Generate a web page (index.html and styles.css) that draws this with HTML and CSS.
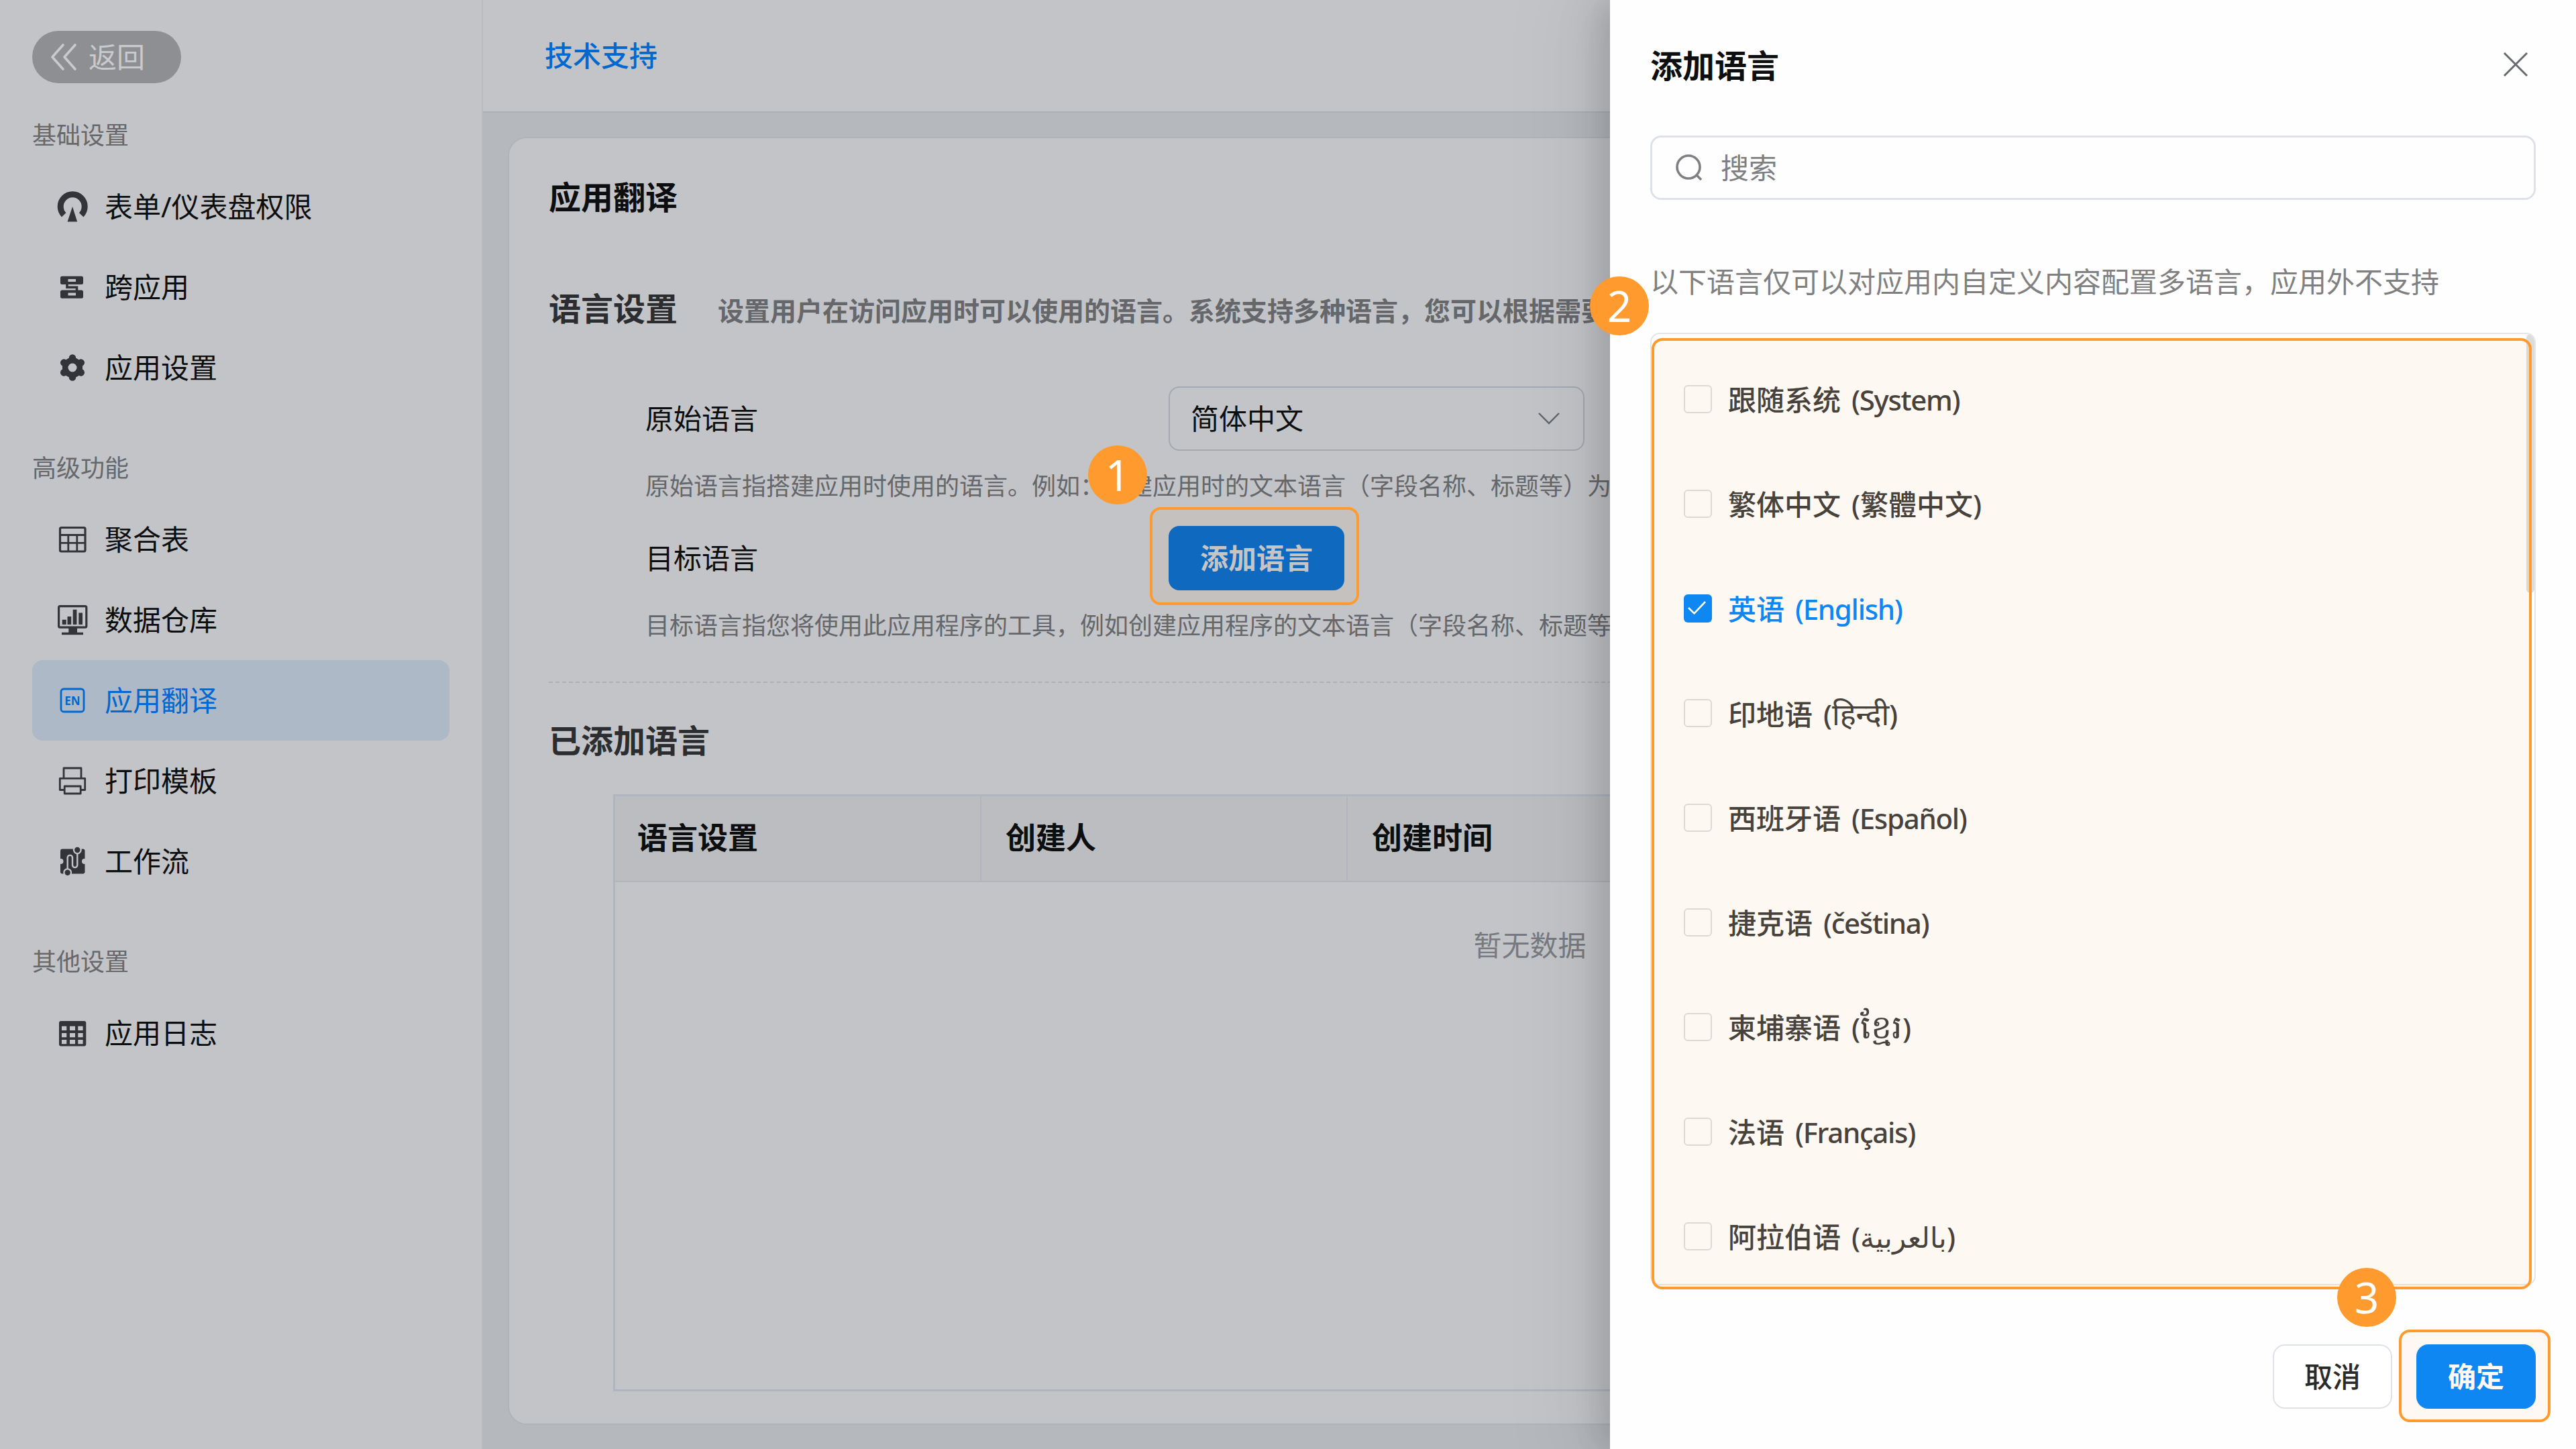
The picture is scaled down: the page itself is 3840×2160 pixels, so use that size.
FILE: index.html
```html
<!DOCTYPE html>
<html lang="zh-CN">
<head>
    <meta charset="UTF-8">
    <meta name="viewport" content="width=device-width, initial-scale=1.0">
    <title>应用翻译</title>
    <link rel="stylesheet" href="styles.css">
</head>
<body>
    <div class="app">
        <aside class="sidebar">
            <a class="back-button">
                <svg width="42" height="42" viewBox="0 0 42 42" fill="none" stroke="currentColor" stroke-width="3.6" stroke-linecap="round" stroke-linejoin="round">
                    <path d="M20 3 4 21l16 18M38 3 22 21l16 18"/>
                </svg>
                <span>返回</span>
            </a>

            <div class="nav-group">
                <h3 class="nav-title">基础设置</h3>
                <a class="nav-item">
                    <svg class="nav-icon" viewBox="0 0 48 48">
                        <path d="M11.2 36.3A18 18 0 1 1 37.2 36.3" fill="none" stroke="currentColor" stroke-width="9"/>
                        <path d="M24 24l7.2 22.6H16.6z" fill="currentColor"/>
                    </svg>
                    <span>表单/仪表盘权限</span>
                </a>
                <a class="nav-item">
                    <svg class="nav-icon" viewBox="0 0 48 48" fill="none" stroke="currentColor" stroke-width="4">
                        <path d="M8.500 7.700h29a2.500 2.500 0 0 1 2.500 2.500v7.300a2.500 2.500 0 0 1-2.500 2.500h-29a2.500 2.500 0 0 1-2.500-2.500v-7.300a2.500 2.500 0 0 1 2.500-2.500zM17.500 11.900v4h11.500v-4zM8.500 28.400h29a2.500 2.500 0 0 1 2.500 2.500v7.300a2.500 2.500 0 0 1-2.500 2.500h-29a2.500 2.500 0 0 1-2.500-2.500v-7.300a2.500 2.500 0 0 1 2.500-2.500zM17.500 32.500v4h11.500v-4z" fill="currentColor" fill-rule="evenodd" stroke="none"/>
                        <path d="M16 19v5.200h14.500V29" stroke-width="3.600"/>
                    </svg>
                    <span>跨应用</span>
                </a>
                <a class="nav-item">
                    <svg class="nav-icon" viewBox="-24 -24 48 48" fill="none" stroke="currentColor" stroke-linecap="round">
                        <circle r="10.8" stroke-width="8.600"/>
                        <path d="M0-12V-14.500M0 12V14.500M10.400-6 12.800-7.400M-10.400-6-12.800-7.400M10.400 6 12.800 7.400M-10.400 6-12.800 7.400" stroke-width="10.500"/>
                    </svg>
                    <span>应用设置</span>
                </a>
            </div>

            <div class="nav-group">
                <h3 class="nav-title">高级功能</h3>
                <a class="nav-item">
                    <svg class="nav-icon" viewBox="0 0 48 48" fill="none" stroke="currentColor" stroke-width="3.2">
                        <rect x="5.500" y="6.500" width="37.500" height="35.500" rx="2"/>
                        <path d="M5.500 17.500H43M5.500 29.300H43M17.800 17.500V42M30.800 17.500V42" stroke-width="2.800"/>
                    </svg>
                    <span>聚合表</span>
                </a>
                <a class="nav-item">
                    <svg class="nav-icon" viewBox="0 0 48 48" fill="currentColor">
                        <rect x="3.600" y="3.600" width="41.200" height="31.600" rx="2" fill="none" stroke="currentColor" stroke-width="3.200"/>
                        <path d="M8.700 23.700h6V31h-6zM16.500 19h5.700v12h-5.700zM24.700 8.700h5.700V31h-5.700zM33.300 13.500H39V31h-5.700zM18.300 36h12.700v7H18.300zM8 42.700h32v3.500H8z"/>
                    </svg>
                    <span>数据仓库</span>
                </a>
                <a class="nav-item active">
                    <svg class="nav-icon" viewBox="0 0 48 48">
                        <rect x="7" y="7" width="34" height="34" rx="4" fill="none" stroke="currentColor" stroke-width="2.800"/>
                        <text class="icon-text" x="24" y="30.800" text-anchor="middle">EN</text>
                    </svg>
                    <span>应用翻译</span>
                </a>
                <a class="nav-item">
                    <svg class="nav-icon" viewBox="0 0 48 48" fill="none" stroke="currentColor" stroke-width="2.800" stroke-linejoin="round">
                        <path d="M11 20V5h26v15M12 37.500H5.300V20.300h37.400V37.500H36M12.200 32h24v11h-24z"/>
                    </svg>
                    <span>打印模板</span>
                </a>
                <a class="nav-item">
                    <svg class="nav-icon" viewBox="0 0 48 48">
                        <rect x="6" y="5.500" width="36.500" height="37" rx="3" fill="currentColor"/>
                        <g class="cutout">
                            <circle cx="6.500" cy="24" r="4"/>
                            <circle cx="42" cy="24" r="4"/>
                            <circle cx="31.300" cy="7" r="6.500"/>
                            <circle cx="16.700" cy="40.700" r="6.500"/>
                        </g>
                        <path class="cutout-line" d="M16.700 36V18.500a3.650 3.650 0 0 1 7.300 0V29.500a3.650 3.650 0 0 0 7.300 0V11"/>
                        <circle cx="31.300" cy="7" r="4.200" fill="currentColor"/>
                        <circle cx="16.700" cy="40.700" r="4.200" fill="currentColor"/>
                    </svg>
                    <span>工作流</span>
                </a>
            </div>

            <div class="nav-group">
                <h3 class="nav-title">其他设置</h3>
                <a class="nav-item">
                    <svg class="nav-icon" viewBox="0 0 48 48">
                        <path d="M7 6h34.300a3 3 0 0 1 3 3v31.500a3 3 0 0 1-3 3H7a3 3 0 0 1-3-3V9a3 3 0 0 1 3-3zM8 13.800v6.200h7.300v-6.200zM20 13.800v6.200h8v-6.200zM32.300 13.800v6.200h7.300v-6.200zM8 24v6.200h7.300V24zM20 24v6.200h8V24zM32.300 24v6.200h7.300V24zM8 34v6.200h7.300V34zM20 34v6.200h8V34zM32.300 34v6.200h7.300V34z" fill="currentColor" fill-rule="evenodd"/>
                    </svg>
                    <span>应用日志</span>
                </a>
            </div>
        </aside>

        <main class="main">
            <header class="topbar">
                <span class="app-name">技术支持</span>
            </header>

            <section class="card">
                <h1 class="card-title">应用翻译</h1>

                <div class="section-head">
                    <h2 class="section-title">语言设置</h2>
                    <p class="section-desc">设置用户在访问应用时可以使用的语言。系统支持多种语言，您可以根据需要添加或删除语言。</p>
                </div>

                <div class="settings">
                    <div class="setting-row">
                        <label class="setting-label">原始语言</label>
                        <div class="select">
                            <span>简体中文</span>
                            <svg width="32" height="20" viewBox="0 0 32 20" fill="none" stroke="currentColor" stroke-width="2.400">
                                <path d="M1 2l15 15L31 2"/>
                            </svg>
                        </div>
                    </div>
                    <p class="setting-desc">原始语言指搭建应用时使用的语言。例如：创建应用时的文本语言（字段名称、标题等）为中文</p>
                    <div class="setting-row second">
                        <label class="setting-label">目标语言</label>
                        <button class="add-button">添加语言</button>
                    </div>
                    <p class="setting-desc">目标语言指您将使用此应用程序的工具，例如创建应用程序的文本语言（字段名称、标题等）</p>
                </div>

                <div class="divider"></div>

                <h2 class="section-title">已添加语言</h2>
                <div class="table">
                    <div class="table-head">
                        <div class="table-cell">语言设置</div>
                        <div class="table-cell">创建人</div>
                        <div class="table-cell">创建时间</div>
                        <div class="table-cell"></div>
                        <div class="table-cell"></div>
                    </div>
                    <div class="table-empty">暂无数据</div>
                </div>
            </section>
        </main>
    </div>

    <div class="drawer">
        <div class="drawer-head">
            <h2 class="drawer-title">添加语言</h2>
            <svg class="close-icon" width="40" height="40" viewBox="0 0 40 40" fill="none" stroke="currentColor" stroke-width="3">
                <path d="M3 3l34 34M37 3L3 37"/>
            </svg>
        </div>

        <div class="search">
            <svg width="42" height="42" viewBox="0 0 42 42" fill="none" stroke="currentColor" stroke-width="3.600">
                <circle cx="20" cy="20" r="17"/>
                <path d="M32 32l7 7"/>
            </svg>
            <span>搜索</span>
        </div>

        <p class="drawer-hint">以下语言仅可以对应用内自定义内容配置多语言，应用外不支持</p>

        <div class="lang-list">
            <div class="lang-item"><i class="checkbox"></i><span>跟随系统 <span class="latin">(System)</span></span></div>
            <div class="lang-item"><i class="checkbox"></i><span>繁体中文 (繁體中文)</span></div>
            <div class="lang-item checked">
                <i class="checkbox">
                    <svg width="42" height="42" viewBox="0 0 42 42" fill="none" stroke="#fff" stroke-width="2.600">
                        <path d="M7 20l8.500 8.500L32 11"/>
                    </svg>
                </i>
                <span>英语 <span class="latin">(English)</span></span>
            </div>
            <div class="lang-item"><i class="checkbox"></i><span>印地语 (<span class="hindi" lang="hi">हिन्दी</span>)</span></div>
            <div class="lang-item"><i class="checkbox"></i><span>西班牙语 <span class="latin">(Español)</span></span></div>
            <div class="lang-item"><i class="checkbox"></i><span>捷克语 <span class="latin">(čeština)</span></span></div>
            <div class="lang-item"><i class="checkbox"></i><span>柬埔寨语 (<span class="khmer" lang="km">ខ្មែរ</span>)</span></div>
            <div class="lang-item"><i class="checkbox"></i><span>法语 <span class="latin">(Français)</span></span></div>
            <div class="lang-item"><i class="checkbox"></i><span>阿拉伯语 (<bdi lang="ar">بالعربية</bdi>)</span></div>
            <div class="scrollbar"></div>
        </div>

        <div class="drawer-foot">
            <button class="button">取消</button>
            <button class="button primary">确定</button>
        </div>
    </div>

    <!-- step markers -->
    <div class="highlight highlight-add"></div>
    <div class="highlight highlight-list"></div>
    <div class="highlight highlight-ok"></div>
    <div class="step step-1">1</div>
    <div class="step step-2">2</div>
    <div class="step step-3">3</div>
</body>
</html>
```

FILE: styles.css
```css
* {
    box-sizing: border-box;
}

body {
    margin: 0;
    width: 3840px;
    height: 2160px;
    position: relative;
    overflow: hidden;
    font-family: "Noto Sans", "Noto Sans CJK SC", sans-serif;
    font-size: 42px;
    line-height: 1.45;
    color: #0d0e10;
    background: #b5b9be;
}

h1, h2, h3, p {
    margin: 0;
}

button {
    font-family: inherit;
    line-height: inherit;
    padding: 0;
}

.app {
    display: flex;
    height: 2160px;
}

/* sidebar */
.sidebar {
    width: 720px;
    flex-shrink: 0;
    padding: 46px 48px 0;
    background: #c2c4c8;
    border-right: 2px solid #b9babe;
}

.back-button {
    display: flex;
    align-items: center;
    gap: 16px;
    width: 222px;
    height: 78px;
    padding-left: 26px;
    border-radius: 39px;
    background: #8e8f93;
    color: #c9cacd;
}

.nav-group {
    margin-top: 40px;
}

.back-button + .nav-group {
    margin-top: 28px;
}

.nav-title {
    height: 96px;
    font-size: 36px;
    font-weight: 400;
    line-height: 99px;
    color: #66686b;
}

.nav-item {
    display: flex;
    align-items: center;
    gap: 24px;
    height: 120px;
    padding-left: 36px;
    border-radius: 16px;
}

.nav-item.active {
    width: 622px;
    background: #adb9c6;
    color: #0068cf;
}

.nav-icon {
    width: 48px;
    height: 48px;
    color: #323439;
}

.active .nav-icon {
    color: #0068cf;
}

.icon-text {
    font: bold 17px "Noto Sans", sans-serif;
    fill: currentColor;
}

.cutout {
    fill: #c2c4c8;
}

.cutout-line {
    fill: none;
    stroke: #c2c4c8;
    stroke-width: 2.4;
}

/* main area */
.main {
    flex: 1;
    min-width: 0;
    display: flex;
    flex-direction: column;
}

.topbar {
    display: flex;
    align-items: center;
    height: 168px;
    padding-left: 92px;
    background: #c2c4c8;
    border-bottom: 2px solid #adb0b4;
}

.app-name {
    font-weight: 500;
    color: #0068cf;
}

.card {
    flex: 1;
    margin: 36px 38px 36px 37px;
    padding: 50px 58px 0 59px;
    background: #c2c4c8;
    border: 2px solid #b0b3b7;
    border-radius: 28px;
}

.card-title {
    height: 72px;
    font-size: 48px;
    font-weight: 700;
    line-height: 76px;
}

.section-head {
    display: flex;
    align-items: baseline;
    gap: 60px;
    height: 72px;
    margin-top: 94px;
}

.section-title {
    height: 72px;
    font-size: 48px;
    font-weight: 700;
    line-height: 76px;
    color: #2b2d30;
}

.section-desc {
    font-size: 39px;
    font-weight: 700;
    line-height: 60px;
    white-space: nowrap;
    color: #65676b;
}

.settings {
    margin-top: 82px;
    padding-left: 144px;
}

.setting-row {
    display: flex;
    align-items: center;
    height: 96px;
}

.setting-row.second {
    margin-top: 34px;
}

.setting-label {
    width: 780px;
}

.select {
    display: flex;
    align-items: center;
    justify-content: space-between;
    width: 620px;
    height: 96px;
    padding: 0 35px 0 31px;
    border: 2px solid #a4a9b2;
    border-radius: 16px;
}

.select svg {
    color: #5f6267;
}

.setting-desc {
    height: 54px;
    margin-top: 24px;
    font-size: 36px;
    line-height: 58px;
    white-space: nowrap;
    color: #65676b;
}

.add-button {
    width: 262px;
    height: 96px;
    border: none;
    border-radius: 16px;
    background: #0068c8;
    color: #c5c7cc;
    font-size: 42px;
    font-weight: 700;
}

.divider {
    margin: 58px 0 48px;
    border-top: 2px dashed #adafb3;
}

.table {
    width: 2736px;
    height: 890px;
    margin: 46px 0 0 96px;
    border: 3px solid #b1b5bf;
}

.table-head {
    display: grid;
    grid-template-columns: repeat(5, 546px);
    height: 128px;
    background: #bbbdc1;
    border-bottom: 2px solid #b1b4ba;
}

.table-cell {
    display: flex;
    align-items: center;
    padding: 0 0 2px 36px;
    font-size: 45px;
    font-weight: 700;
    border-right: 2px solid #b1b5bf;
}

.table-cell:first-child {
    padding-left: 33px;
}

.table-empty {
    padding: 62px 3px 0 0;
    line-height: 64px;
    text-align: center;
    color: #777a80;
}

/* drawer */
.drawer {
    position: absolute;
    top: 0;
    right: 0;
    display: flex;
    flex-direction: column;
    width: 1440px;
    height: 2160px;
    padding: 60px 60px 0;
    background: #fefefe;
    box-shadow: -14px 0 38px rgba(0, 0, 0, 0.1), -22px 0 67px rgba(0, 0, 0, 0.07), -29px 0 115px 38px rgba(0, 0, 0, 0.04);
}

.drawer-head {
    display: flex;
    align-items: center;
    justify-content: space-between;
    height: 72px;
    padding-right: 10px;
}

.drawer-title {
    height: 72px;
    font-size: 48px;
    font-weight: 700;
    line-height: 76px;
}

.close-icon {
    color: #66696e;
}

.search {
    display: flex;
    align-items: center;
    gap: 26px;
    height: 96px;
    margin-top: 70px;
    padding-left: 34px;
    border: 3px solid #dee1e8;
    border-radius: 16px;
    color: #7d7f82;
}

.drawer-hint {
    margin-top: 92px;
    line-height: 60px;
    white-space: nowrap;
    color: #808080;
}

.lang-list {
    position: relative;
    height: 1420px;
    margin-top: 46px;
    padding-top: 19px;
    border: 2px solid #e5e5e5;
    border-radius: 14px;
    overflow: hidden;
    font-weight: 500;
    color: #3d3d3d;
}

.lang-item {
    display: flex;
    align-items: center;
    gap: 24px;
    height: 156px;
    padding-left: 48px;
    line-height: 60px;
    white-space: nowrap;
    word-spacing: 5px;
}

.lang-item > span {
    padding-top: 2px;
}

.lang-item.checked {
    color: #0086ff;
}

.latin {
    letter-spacing: -1.3px;
}

.hindi {
    font-size: 45px;
    font-weight: 400;
}

.khmer {
    font-size: 49px;
    font-weight: 400;
    line-height: 1;
}

.checkbox {
    width: 42px;
    height: 42px;
    border: 2px solid #dedede;
    border-radius: 6px;
}

.checked .checkbox {
    border: none;
    background: #0086ff;
}

.checkbox svg {
    display: block;
}

.scrollbar {
    position: absolute;
    top: 0;
    right: 0;
    width: 12px;
    height: 386px;
    border-radius: 6px;
    background: #dcdcdc;
}

.drawer-foot {
    display: flex;
    justify-content: flex-end;
    gap: 36px;
    margin-top: 88px;
}

.button {
    width: 178px;
    height: 96px;
    border: 2px solid #dfe2ea;
    border-radius: 18px;
    background: #fff;
    color: #2b2b2b;
    font-size: 42px;
    font-weight: 500;
}

.button.primary {
    border: none;
    background: #0086ff;
    color: #fff;
    font-weight: 700;
}

/* step markers */
.highlight {
    position: absolute;
    border: 4px solid #ff9a2e;
    border-radius: 16px;
    background: rgba(255, 154, 46, 0.06);
}

.highlight-add {
    left: 1714px;
    top: 756px;
    width: 312px;
    height: 146px;
}

.highlight-list {
    left: 2462px;
    top: 504px;
    width: 1312px;
    height: 1418px;
}

.highlight-ok {
    left: 3576px;
    top: 1982px;
    width: 226px;
    height: 138px;
}

.step {
    position: absolute;
    width: 88px;
    height: 88px;
    border-radius: 50%;
    background: #ff9a2e;
    color: #fff;
    font-size: 64px;
    line-height: 88px;
    text-align: center;
}

.step-1 {
    left: 1622px;
    top: 664px;
}

.step-2 {
    left: 2370px;
    top: 412px;
}

.step-3 {
    left: 3484px;
    top: 1890px;
}
```
